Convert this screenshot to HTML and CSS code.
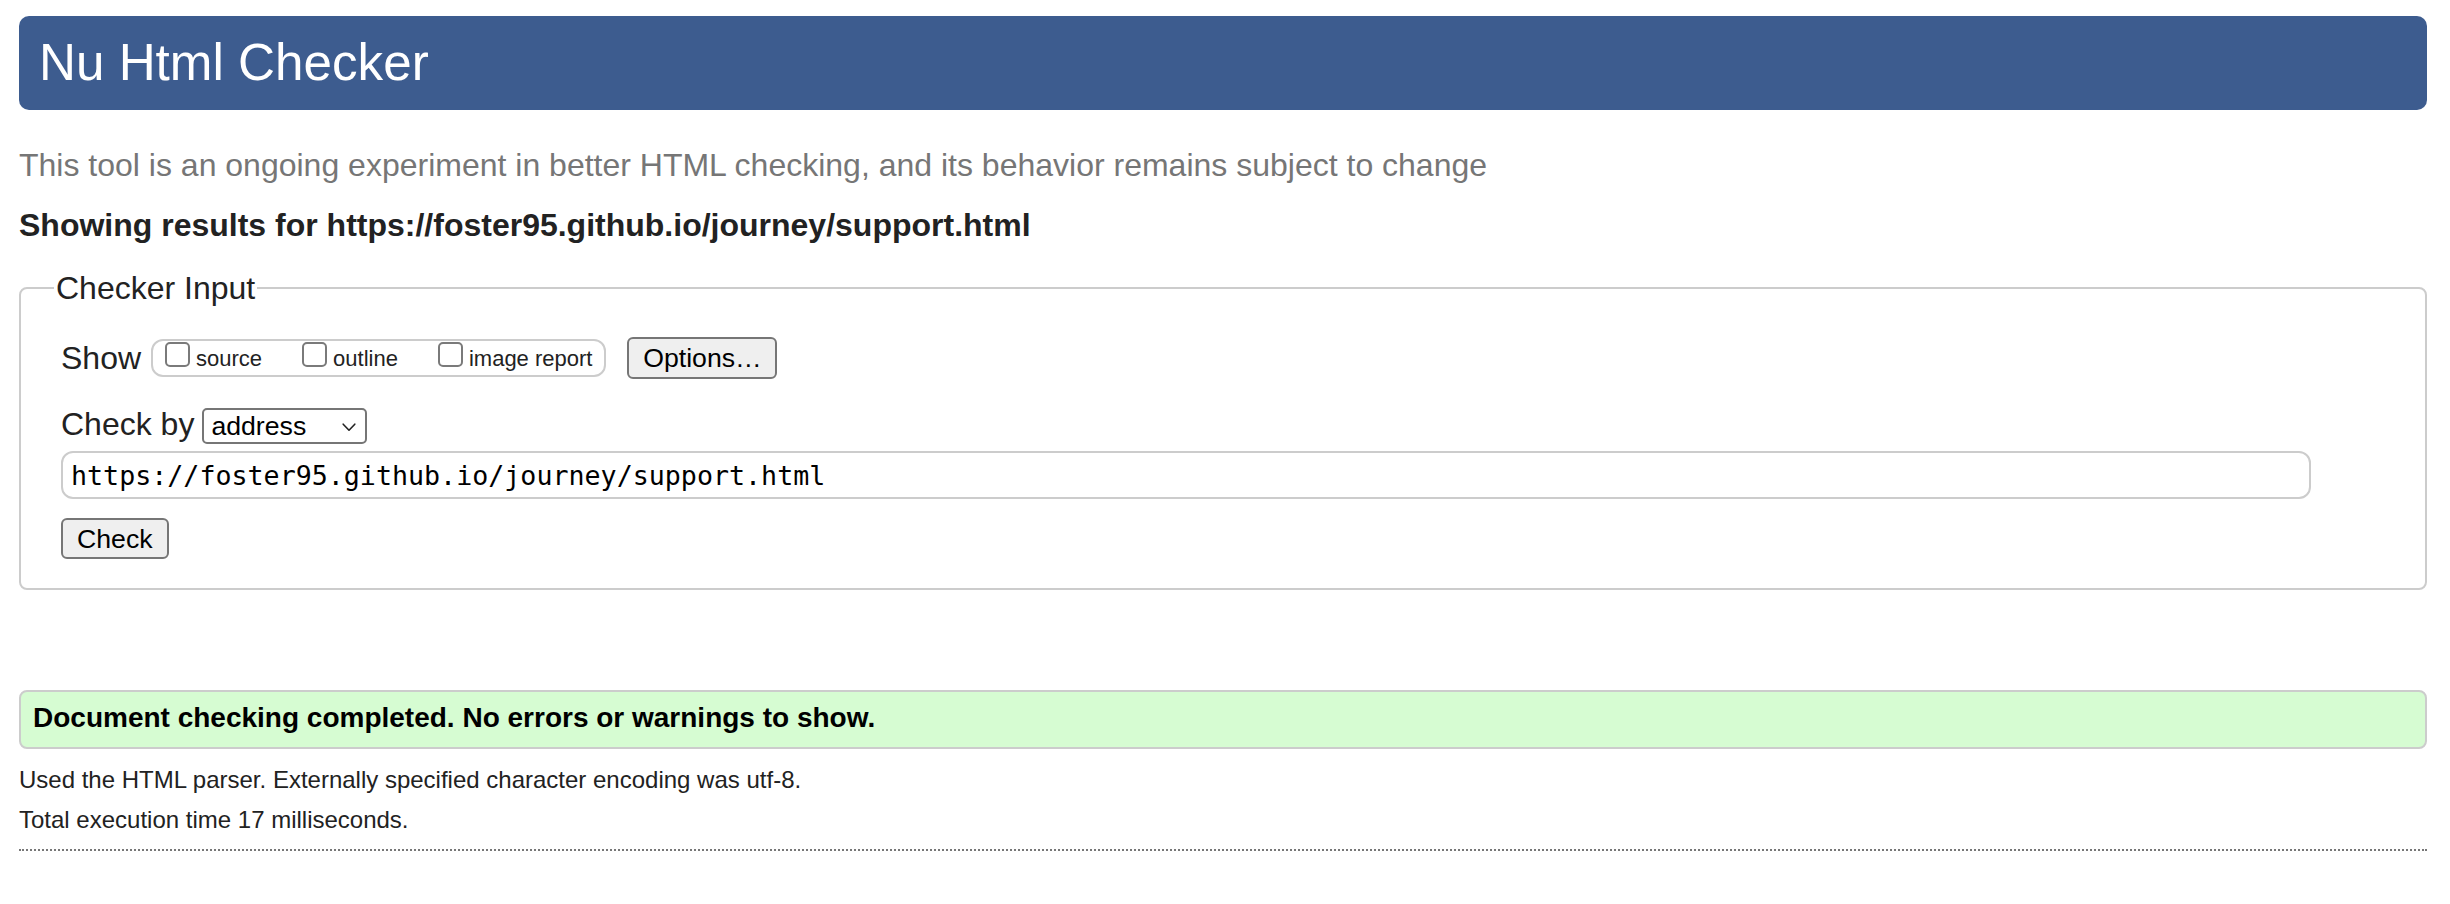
FILE: index.html
```html
<!DOCTYPE html>
<html lang="en">
<head>
<meta charset="utf-8">
<title>Showing results for https://foster95.github.io/journey/support.html - Nu Html Checker</title>
<link rel="stylesheet" href="styles.css">
</head>
<body>
<h1 class="title">Nu Html Checker</h1>
<p class="intro">This tool is an ongoing experiment in better HTML checking, and its behavior remains subject to change</p>
<h2 class="results-for">Showing results for https://foster95.github.io/journey/support.html</h2>
<form class="checker-form">
  <fieldset class="input-set">
    <legend class="input-legend">Checker Input</legend>
    <div class="row show-row">
      <span class="row-label show-label">Show</span>
      <fieldset class="opts">
        <label class="opt"><input type="checkbox" class="cb"><span class="opt-text">source</span></label>
        <label class="opt"><input type="checkbox" class="cb"><span class="opt-text">outline</span></label>
        <label class="opt opt-last"><input type="checkbox" class="cb"><span class="opt-text">image report</span></label>
      </fieldset>
      <button type="button" class="btn options-btn">Options…</button>
    </div>
    <div class="row by-row">
      <label class="row-label by-label">Check by</label>
      <span class="select-wrap">
        <select class="by-select">
          <option>address</option>
          <option>file upload</option>
          <option>text input</option>
        </select>
        <svg class="chev" width="14" height="9" viewBox="0 0 14 9" aria-hidden="true"><path d="M1.2 1.2 L7 7.2 L12.8 1.2" fill="none" stroke="#222" stroke-width="1.6" stroke-linecap="round" stroke-linejoin="round"/></svg>
      </span>
    </div>
    <div class="row url-row">
      <input class="url" type="url" value="https://foster95.github.io/journey/support.html">
    </div>
    <div class="row check-row">
      <button type="button" class="btn check-btn">Check</button>
    </div>
  </fieldset>
</form>
<p class="status">Document checking completed. No errors or warnings to show.</p>
<p class="info">Used the HTML parser. Externally specified character encoding was utf-8.</p>
<p class="info info-time">Total execution time 17 milliseconds.</p>
<hr class="dots">
</body>
</html>
```

FILE: styles.css
```css
html, body {
  background: #ffffff;
}

body {
  margin: 0;
  padding: 16px 23px 0 19px;
  font-family: "Liberation Sans", Arial, Helvetica, sans-serif;
  color: #222222;
}

.title {
  margin: 0;
  height: 94px;
  box-sizing: border-box;
  padding-left: 20px;
  background: #3d5c8f;
  color: #ffffff;
  border-radius: 10px;
  font-size: 51.2px;
  font-weight: normal;
  line-height: 94px;
}

.intro {
  margin: 37px 0 0;
  font-size: 32px;
  line-height: 36px;
  color: #767676;
}

.results-for {
  margin: 24px 0 0;
  font-size: 32px;
  line-height: 36px;
  font-weight: bold;
  color: #222222;
}

.checker-form {
  margin: 0;
}

.input-set {
  margin: 27px 0 0;
  padding: 0 40px 28.5px;
  border: 2px solid #cccccc;
  border-radius: 8px;
  min-width: 0;
}

.input-legend {
  margin-left: -7px;
  padding: 0 2px;
  font-size: 32px;
  line-height: 36px;
  color: #222222;
}

.row {
  display: flex;
  align-items: center;
}

.row-label {
  font-size: 32px;
  line-height: 36px;
  color: #222222;
}

.show-row {
  margin-top: 31px;
}

.show-label {
  margin-right: 10px;
}

.opts {
  display: flex;
  align-items: center;
  gap: 40px;
  margin: 0;
  height: 38px;
  box-sizing: border-box;
  padding: 0 12px 0 12px;
  border: 2px solid #cccccc;
  border-radius: 12px;
  min-width: 0;
}

.opt {
  display: flex;
  align-items: center;
  gap: 6px;
}

.cb {
  appearance: none;
  -webkit-appearance: none;
  margin: 0 0 8px 0;
  width: 25px;
  height: 25px;
  box-sizing: border-box;
  border: 2px solid #7a7a7a;
  border-radius: 5px;
  background: #ffffff;
}

.opt-text {
  font-size: 22px;
  line-height: 26px;
  padding-top: 2px;
  color: #222222;
}

.btn {
  box-sizing: border-box;
  border: 2px solid #767676;
  border-radius: 6px;
  background: #efefef;
  color: #000000;
  font-family: "Liberation Sans", Arial, Helvetica, sans-serif;
  font-size: 26.667px;
  line-height: 30px;
}

.options-btn {
  margin-left: 21px;
  width: 150px;
  height: 42px;
  padding: 0;
}

.by-row {
  margin-top: 27px;
  align-items: baseline;
}

.by-label {
  margin-right: 8px;
}

.select-wrap {
  position: relative;
  display: inline-block;
}

.by-select {
  appearance: none;
  -webkit-appearance: none;
  width: 165px;
  height: 36px;
  box-sizing: border-box;
  margin: 0;
  padding: 0 30px 0 7px;
  border: 2px solid #767676;
  border-radius: 5px;
  background: #ffffff;
  color: #000000;
  font-family: "Liberation Sans", Arial, Helvetica, sans-serif;
  font-size: 26.667px;
}

.chev {
  position: absolute;
  right: 11px;
  top: 15px;
  pointer-events: none;
}

.url-row {
  margin-top: 7px;
}

.url {
  width: 2250px;
  height: 48px;
  box-sizing: border-box;
  margin: 0;
  padding: 0 8px;
  border: 2px solid #cccccc;
  border-radius: 12px;
  background: #ffffff;
  color: #000000;
  font-family: "DejaVu Sans Mono", "Liberation Mono", monospace;
  font-size: 26.667px;
}

.check-row {
  margin-top: 19px;
}

.check-btn {
  height: 41px;
  padding: 0 14px;
}

.status {
  margin: 100px 0 0;
  padding: 10px 12px 13px;
  border: 2px solid #cccccc;
  border-radius: 8px;
  background: #d6fcd2;
  color: #000000;
  font-size: 28px;
  line-height: 32px;
  font-weight: bold;
}

.info {
  margin: 17px 0 0;
  font-size: 24px;
  line-height: 28px;
  color: #222222;
}

.info-time {
  margin-top: 12px;
}

.dots {
  margin: 15px 0 0;
  height: 0;
  border: 0;
  border-top: 2px dotted #777777;
}
```
